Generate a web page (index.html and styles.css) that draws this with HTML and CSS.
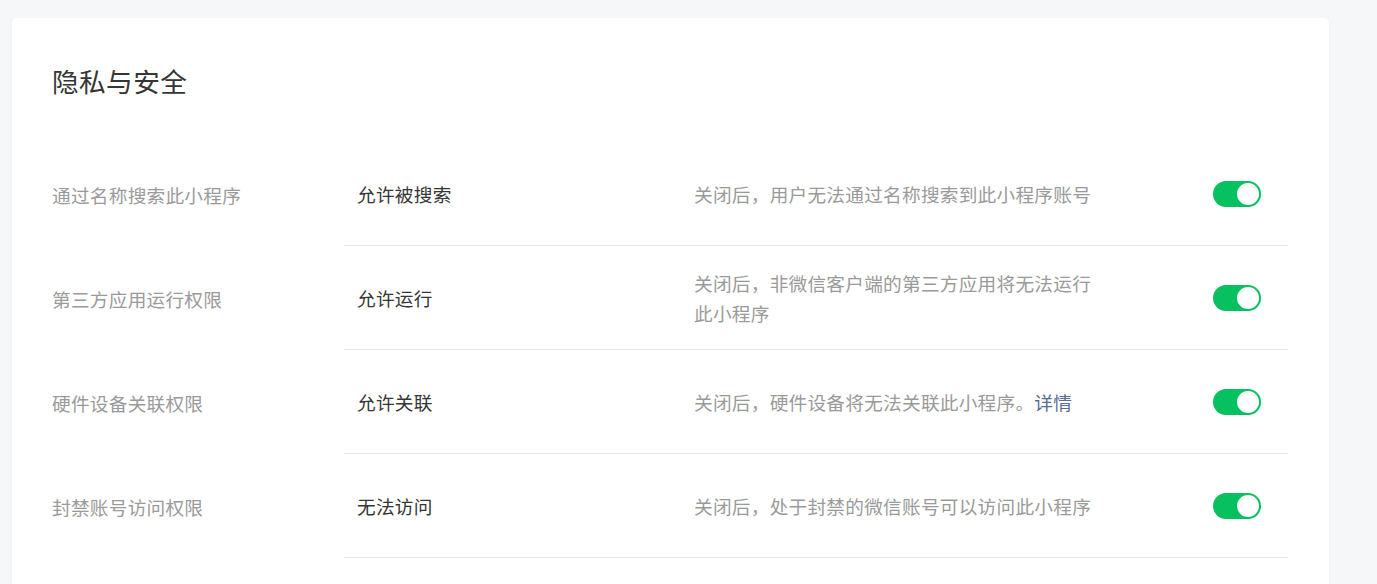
FILE: index.html
```html
<!DOCTYPE html>
<html lang="zh-CN">
<head>
<meta charset="utf-8">
<title>隐私与安全</title>
<link rel="stylesheet" href="styles.css">
</head>
<body>
<div class="page">
  <section class="card">
    <h2 class="card-title">隐私与安全</h2>
    <div class="setting-list">
      <div class="setting-row">
        <div class="setting-label">通过名称搜索此小程序</div>
        <div class="setting-body">
          <div class="setting-value">允许被搜索</div>
          <div class="setting-desc">关闭后，用户无法通过名称搜索到此小程序账号</div>
          <span class="switch is-on"><span class="switch-knob"></span></span>
        </div>
      </div>
      <div class="setting-row">
        <div class="setting-label">第三方应用运行权限</div>
        <div class="setting-body">
          <div class="setting-value">允许运行</div>
          <div class="setting-desc">关闭后，非微信客户端的第三方应用将无法运行此小程序</div>
          <span class="switch is-on"><span class="switch-knob"></span></span>
        </div>
      </div>
      <div class="setting-row">
        <div class="setting-label">硬件设备关联权限</div>
        <div class="setting-body">
          <div class="setting-value">允许关联</div>
          <div class="setting-desc">关闭后，硬件设备将无法关联此小程序。<a class="link" href="#">详情</a></div>
          <span class="switch is-on"><span class="switch-knob"></span></span>
        </div>
      </div>
      <div class="setting-row">
        <div class="setting-label">封禁账号访问权限</div>
        <div class="setting-body">
          <div class="setting-value">无法访问</div>
          <div class="setting-desc">关闭后，处于封禁的微信账号可以访问此小程序</div>
          <span class="switch is-on"><span class="switch-knob"></span></span>
        </div>
      </div>
    </div>
  </section>
</div>
</body>
</html>
```

FILE: styles.css
```css
* { box-sizing: border-box; }

html, body {
  margin: 0;
  padding: 0;
  background: #f6f7f9;
  font-family: "Noto Sans CJK SC", "Noto Sans", sans-serif;
  overflow: hidden;
}

.page {
  padding: 18px 0 0 12px;
}

.card {
  width: 1317px;
  min-height: 620px;
  background: #ffffff;
  border-radius: 5px;
  box-shadow: 0 1px 3px rgba(0, 0, 0, 0.04);
  padding: 0 41px 0 40px;
}

.card-title {
  margin: 0;
  padding-top: 44px;
  height: 124px;
  font-size: 26.67px;
  line-height: 37px;
  letter-spacing: 0.4px;
  font-weight: 400;
  color: #353535;
}

.setting-row {
  display: flex;
  height: 104px;
  font-size: 18.67px;
  letter-spacing: 0.25px;
}

.setting-label {
  flex: none;
  width: 292px;
  display: flex;
  align-items: center;
  color: #9a9a9a;
}

.setting-body {
  flex: 1;
  display: flex;
  align-items: center;
  border-bottom: 1px solid #e7e7eb;
}

.setting-value {
  flex: none;
  width: 350px;
  padding-left: 13px;
  color: #353535;
}

.setting-desc {
  flex: none;
  width: 405px;
  color: #9a9a9a;
  line-height: 29.3px;
}

.link {
  color: #576b95;
  text-decoration: none;
}

.switch {
  margin-left: auto;
  margin-right: 27px;
  width: 48px;
  height: 26px;
  border-radius: 13px;
  background: #07c160;
  display: flex;
  align-items: center;
  justify-content: flex-end;
  padding: 2px;
}

.switch-knob {
  width: 22px;
  height: 22px;
  border-radius: 50%;
  background: #ffffff;
}
```
